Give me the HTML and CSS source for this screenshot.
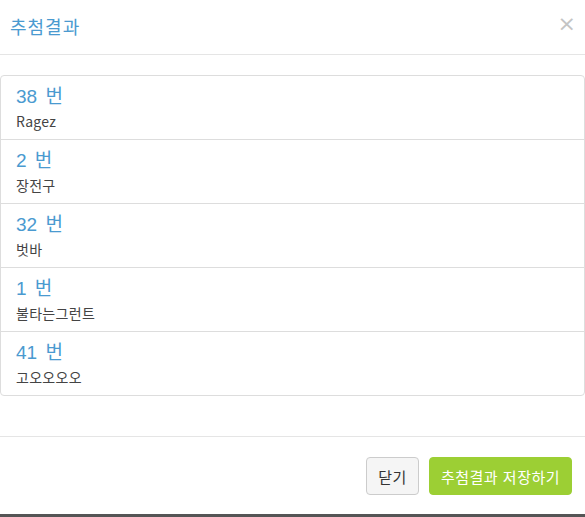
FILE: index.html
```html
<!DOCTYPE html>
<html lang="ko">
<head>
<meta charset="utf-8">
<link rel="stylesheet" href="styles.css">
</head>
<body>
<div class="modal">
  <div class="modal-header">
    <h4 class="modal-title">추첨결과</h4>
    <span class="close">&times;</span>
  </div>
  <div class="modal-body">
    <ul class="list-group">
      <li class="item"><div class="num">38 번</div><div class="name">Ragez</div></li>
      <li class="item"><div class="num">2 번</div><div class="name">장전구</div></li>
      <li class="item"><div class="num">32 번</div><div class="name">벗바</div></li>
      <li class="item"><div class="num">1 번</div><div class="name">불타는그런트</div></li>
      <li class="item"><div class="num">41 번</div><div class="name">고오오오오</div></li>
    </ul>
  </div>
  <div class="modal-footer">
    <button class="btn btn-default">닫기</button>
    <button class="btn btn-green">추첨결과 저장하기</button>
  </div>
</div>
<div class="backdrop-strip"></div>
</body>
</html>
```
FILE: styles.css
```css
* { box-sizing: border-box; }
html, body { margin: 0; padding: 0; background: #fff; }
body {
  width: 585px;
  height: 517px;
  overflow: hidden;
  font-family: "Noto Sans CJK KR", "Noto Sans", sans-serif;
  color: #333;
}
.modal {
  height: 514px;
  background: #fff;
  display: flex;
  flex-direction: column;
}
.modal-header {
  height: 55px;
  border-bottom: 1px solid #e5e5e5;
  display: flex;
  align-items: center;
  justify-content: space-between;
  padding: 0 10px 2px 10px;
}
.modal-title {
  margin: 0;
  font-size: 18px;
  font-weight: normal;
  color: #4a9ad0;
  letter-spacing: 1px;
}
.close {
  font-family: "DejaVu Sans", sans-serif;
  font-size: 22px;
  color: #c4c4c4;
  line-height: 1;
  margin-right: -1px;
  margin-top: -4px;
}
.modal-body {
  padding: 20px 0 40px 0;
}
.list-group {
  list-style: none;
  margin: 0;
  padding: 0;
}
.item {
  border: 1px solid #ddd;
  margin-bottom: -1px;
  height: 65px;
  padding: 9px 15px 0 15px;
}
.item:first-child { border-radius: 4px 4px 0 0; }
.item:last-child { border-radius: 0 0 4px 4px; margin-bottom: 0; }
.num {
  font-family: "Liberation Sans", "Noto Sans CJK KR", sans-serif;
  font-size: 19px;
  color: #4a9ad0;
  line-height: 24px;
  word-spacing: 3px;
}
.name {
  font-size: 14px;
  color: #444;
  line-height: 22px;
  margin-top: 1px;
  letter-spacing: 0.3px;
}
.modal-footer {
  border-top: 1px solid #e5e5e5;
  display: flex;
  justify-content: flex-end;
  gap: 10px;
  padding: 20px 13px 0 0;
}
.btn {
  font-family: "Noto Sans CJK KR", sans-serif;
  font-size: 15px;
  height: 38px;
  border-radius: 4px;
  padding: 0 10px;
  cursor: pointer;
  letter-spacing: 0.5px;
}
.btn-default {
  background: #f5f5f5;
  border: 1px solid #ccc;
  color: #333;
  width: 53px;
}
.btn-green {
  background: #9ccf34;
  border: 1px solid #9ccf34;
  color: #fff;
  width: 143px;
}
.backdrop-strip {
  height: 3px;
  background: #555;
}
```
